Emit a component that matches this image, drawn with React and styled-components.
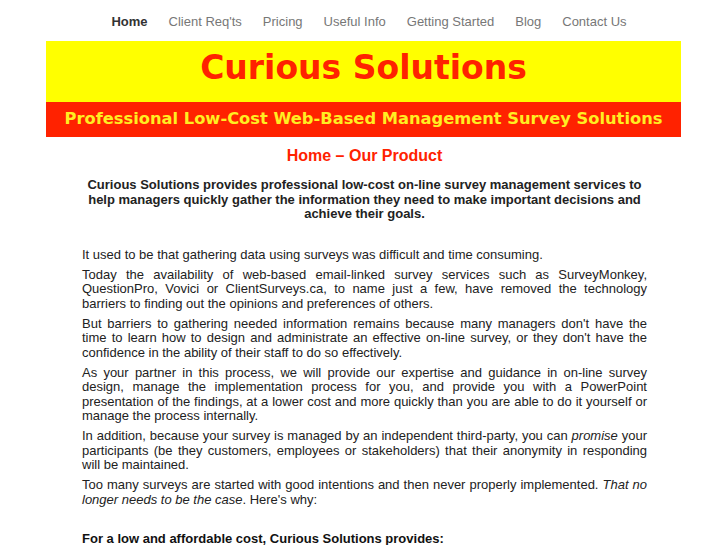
import React from "react";
import styled, { createGlobalStyle } from "styled-components";

const Global = createGlobalStyle`
  html, body { margin: 0; padding: 0; background: #fff; }
  body { font-family: "Liberation Sans", Arial, sans-serif; color: #222; }
`;

const Page = styled.div`
  width: 635px;
  margin: 0 auto;
`;

const Nav = styled.nav`
  height: 41px;
  box-sizing: border-box;
  padding: 2px 0 0 11px;
  display: flex;
  justify-content: center;
  align-items: center;
  gap: 21px;
`;

const NavLink = styled.a`
  font-family: "Liberation Sans", Arial, sans-serif;
  font-size: 13px;
  font-weight: ${(p) => (p.$active ? 700 : 400)};
  color: ${(p) => (p.$active ? "#333" : "#777")};
  text-decoration: none;
  cursor: pointer;
`;

const Banner = styled.header`
  background: #ffff00;
  height: 61px;
  box-sizing: border-box;
  padding-bottom: 8px;
  display: flex;
  align-items: center;
  justify-content: center;
`;

const Title = styled.h1`
  margin: 0;
  font-family: "DejaVu Sans", Verdana, sans-serif;
  font-weight: 700;
  font-size: 33px;
  color: #ff2200;
  line-height: 1;
`;

const Tagline = styled.div`
  background: #ff2200;
  height: 35px;
  box-sizing: border-box;
  padding-bottom: 3px;
  display: flex;
  align-items: center;
  justify-content: center;
  font-family: "DejaVu Sans", Verdana, sans-serif;
  font-weight: 700;
  font-size: 16.3px;
  color: #ffee22;
`;

const Content = styled.main`
  padding: 9px 34px 0 36px;
`;

const Heading = styled.h2`
  margin: 0;
  text-align: center;
  font-size: 16px;
  font-weight: 700;
  color: #ff2200;
  line-height: 20px;
`;

const Intro = styled.p`
  margin: 12px 0 0;
  text-align: center;
  font-weight: 700;
  font-size: 13px;
  line-height: 14.5px;
  color: #222;
`;

const Body = styled.div`
  margin-top: 26px;
`;

const Para = styled.p`
  margin: 0 0 5.5px;
  font-size: 13px;
  line-height: 14.5px;
  text-align: justify;
  color: #222;
`;

const SubHead = styled.p`
  margin: 25px 0 0;
  font-size: 13px;
  line-height: 14.5px;
  font-weight: 700;
  color: #111;
`;

const links = [
  "Home",
  "Client Req'ts",
  "Pricing",
  "Useful Info",
  "Getting Started",
  "Blog",
  "Contact Us",
];

export default function App() {
  return (
    <>
      <Global />
      <Page>
        <Nav>
          {links.map((l, i) => (
            <NavLink key={l} $active={i === 0}>
              {l}
            </NavLink>
          ))}
        </Nav>
        <Banner>
          <Title>Curious Solutions</Title>
        </Banner>
        <Tagline>Professional Low-Cost Web-Based Management Survey Solutions</Tagline>
        <Content>
          <Heading>Home – Our Product</Heading>
          <Intro>
            Curious Solutions provides professional low-cost on-line survey management services to
            help managers quickly gather the information they need to make important decisions and
            achieve their goals.
          </Intro>
          <Body>
            <Para>It used to be that gathering data using surveys was difficult and time consuming.</Para>
            <Para>
              Today the availability of web-based email-linked survey services such as SurveyMonkey,
              QuestionPro, Vovici or ClientSurveys.ca, to name just a few, have removed the technology
              barriers to finding out the opinions and preferences of others.
            </Para>
            <Para>
              But barriers to gathering needed information remains because many managers don't have the
              time to learn how to design and administrate an effective on-line survey, or they don't have the
              confidence in the ability of their staff to do so effectively.
            </Para>
            <Para>
              As your partner in this process, we will provide our expertise and guidance in on-line survey
              design, manage the implementation process for you, and provide you with a PowerPoint
              presentation of the findings, at a lower cost and more quickly than you are able to do it yourself or
              manage the process internally.
            </Para>
            <Para>
              In addition, because your survey is managed by an independent third-party, you can <em>promise</em> your
              participants (be they customers, employees or stakeholders) that their anonymity in responding
              will be maintained.
            </Para>
            <Para>
              Too many surveys are started with good intentions and then never properly implemented. <em>That no
              longer needs to be the case</em>. Here's why:
            </Para>
            <SubHead>For a low and affordable cost, Curious Solutions provides:</SubHead>
          </Body>
        </Content>
      </Page>
    </>
  );
}
